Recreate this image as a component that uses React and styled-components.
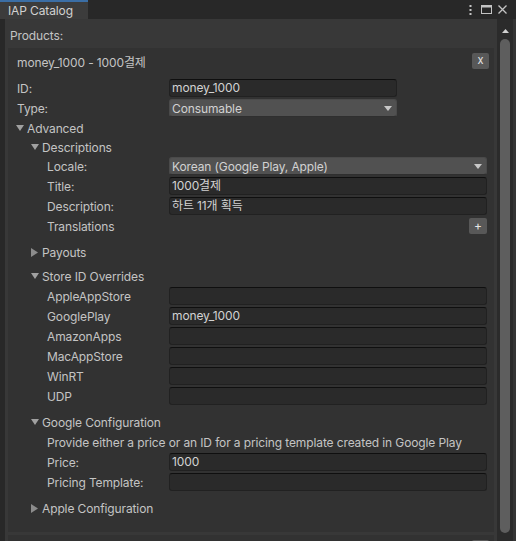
import React from 'react';
import styled, { createGlobalStyle } from 'styled-components';

const Global = createGlobalStyle`
  html, body { margin: 0; padding: 0; background: #282828; }
  body {
    font-family: Inter, "Noto Sans CJK KR", "DejaVu Sans", sans-serif;
    font-size: 12px;
    letter-spacing: -0.12px;
    color: #c4c4c4;
  }
  * { box-sizing: border-box; }
`;

const Window = styled.div`
  width: 516px;
  height: 541px;
  overflow: hidden;
  display: flex;
  flex-direction: column;
  background: #282828;
`;

const TabBar = styled.div`
  height: 19px;
  flex-shrink: 0;
  display: flex;
  align-items: stretch;
  background: #282828;
`;

const Tab = styled.div`
  width: 88px;
  border-top: 2px solid #3b6ea5;
  background: #3c3c3c;
  padding-left: 8px;
  display: flex;
  align-items: center;
  color: #d2d2d2;
`;

const TabIcons = styled.div`
  margin-left: auto;
  display: flex;
  align-items: center;
  padding-right: 6px;
`;

const IconSlot = styled.div`
  width: ${p => p.$w}px;
  height: 19px;
  display: flex;
  align-items: center;
  justify-content: center;
`;

const Body = styled.div`
  flex: 1;
  display: flex;
  min-height: 0;
`;

const LeftStrip = styled.div`
  width: 5px;
  background: #282828;
  flex-shrink: 0;
`;

const Panel = styled.div`
  flex: 1;
  background: #383838;
  padding: 8px 3px 0 3px;
  display: flex;
  flex-direction: column;
  overflow: hidden;
`;

const ProductsLabel = styled.div`
  height: 18px;
  line-height: 18px;
  padding-left: 2px;
  color: #c4c4c4;
`;

const Card = styled.div`
  background: #323232;
  margin-top: ${p => p.$mt}px;
  padding: 4px 7px 8px 9px;
  flex-shrink: 0;
`;

const CardHeader = styled.div`
  height: 18px;
  display: flex;
  align-items: center;
  justify-content: space-between;
  margin-bottom: 8px;
  color: #c4c4c4;
`;

const SmallButton = styled.div`
  width: ${p => p.$w}px;
  height: 16px;
  margin-right: ${p => p.$mr}px;
  background: #585858;
  border-radius: 2px;
  color: #e6e6e6;
  font-size: ${p => p.$fs}px;
  line-height: 15px;
  text-align: center;
`;

const Row = styled.div`
  height: 20px;
  display: flex;
  align-items: center;
`;

const Label = styled.div`
  width: 152px;
  flex-shrink: 0;
  padding-left: ${p => p.$indent}px;
  white-space: nowrap;
  color: #c4c4c4;
`;

const Note = styled.div`
  padding-left: ${p => p.$indent}px;
  white-space: nowrap;
  color: #c4c4c4;
`;

const Field = styled.div`
  height: 18px;
  ${p => (p.$w ? `width: ${p.$w}px;` : 'flex: 1;')}
  background: #2a2a2a;
  border: 1px solid #212121;
  border-top-color: #0f0f0f;
  border-radius: 3px;
  padding-left: 2px;
  line-height: 16px;
  color: #d2d2d2;
  white-space: nowrap;
  overflow: hidden;
`;

const Dropdown = styled.div`
  height: 18px;
  ${p => (p.$w ? `width: ${p.$w}px;` : 'flex: 1;')}
  background: #515151;
  border: 1px solid #4a4a4a;
  border-bottom-color: #2f2f2f;
  border-radius: 3px;
  padding: 0 4px 0 2px;
  display: flex;
  align-items: center;
  justify-content: space-between;
  color: #d2d2d2;
  white-space: nowrap;
`;

const Spacer = styled.div`
  flex: 1;
`;

const FoldHeader = styled.div`
  height: ${p => p.$h}px;
  display: flex;
  align-items: center;
  padding-left: ${p => p.$indent}px;
  margin-bottom: ${p => p.$mb}px;
  color: #c4c4c4;
  white-space: nowrap;
`;

const Arrow = styled.div`
  width: 10px;
  margin-left: -1px;
  margin-right: 1px;
  flex-shrink: 0;
  display: flex;
  align-items: center;
`;

const FoldBody = styled.div`
  padding-bottom: 6px;
`;

const Scrollbar = styled.div`
  width: 16px;
  flex-shrink: 0;
  background: #2b2b2b;
  display: flex;
  flex-direction: column;
  align-items: center;
  padding: 10px 0 8px 0;
`;

const ScrollArrow = styled.div`
  height: 4px;
  margin-bottom: 6px;
  display: flex;
`;

const Thumb = styled.div`
  flex: 1;
  width: 10px;
  background: #5e5e5e;
  border-radius: 5px;
`;

const RightStrip = styled.div`
  width: 3px;
  flex-shrink: 0;
  background: #353535;
`;

const TriDown = ({ color = '#a0a0a0', w = 8, h = 6 }) => (
  <svg width={w} height={h} viewBox={`0 0 ${w} ${h}`}>
    <polygon points={`0,0 ${w},0 ${w / 2},${h}`} fill={color} />
  </svg>
);

const TriRight = () => (
  <svg width="7" height="9" viewBox="0 0 7 9">
    <polygon points="0,0 7,4.5 0,9" fill="#8c8c8c" />
  </svg>
);

const Foldout = ({ title, open, indent, h = 20, mb = 0, children }) => (
  <div>
    <FoldHeader $indent={indent} $h={h} $mb={open ? 0 : mb}>
      <Arrow>{open ? <TriDown color="#a0a0a0" w={8} h={6} /> : <TriRight />}</Arrow>
      {title}
    </FoldHeader>
    {open && <FoldBody>{children}</FoldBody>}
  </div>
);

const FieldRow = ({ label, value = '', indent = 30, w }) => (
  <Row>
    <Label $indent={indent}>{label}</Label>
    <Field $w={w}>{value}</Field>
  </Row>
);

const DropRow = ({ label, value, indent = 30, w }) => (
  <Row>
    <Label $indent={indent}>{label}</Label>
    <Dropdown $w={w}>
      <span>{value}</span>
      <TriDown color="#c8c8c8" w={8} h={5} />
    </Dropdown>
  </Row>
);

export default function App() {
  return (
    <>
      <Global />
      <Window>
        <TabBar>
          <Tab>IAP Catalog</Tab>
          <TabIcons>
            <IconSlot $w={16}>
              <svg width="3" height="10" viewBox="0 0 3 10">
                <rect x="0.5" y="0" width="2" height="2" fill="#c4c4c4" />
                <rect x="0.5" y="4" width="2" height="2" fill="#c4c4c4" />
                <rect x="0.5" y="8" width="2" height="2" fill="#c4c4c4" />
              </svg>
            </IconSlot>
            <IconSlot $w={16}>
              <svg width="11" height="9" viewBox="0 0 11 9">
                <rect x="0.5" y="0.5" width="10" height="8" fill="none" stroke="#c4c4c4" strokeWidth="1" />
                <rect x="0.5" y="0.5" width="10" height="2" fill="#c4c4c4" />
              </svg>
            </IconSlot>
            <IconSlot $w={16}>
              <svg width="9" height="9" viewBox="0 0 9 9">
                <path d="M0.5 0.5 L8.5 8.5 M8.5 0.5 L0.5 8.5" stroke="#c4c4c4" strokeWidth="1.3" />
              </svg>
            </IconSlot>
          </TabIcons>
        </TabBar>
        <Body>
          <LeftStrip />
          <Panel>
            <ProductsLabel>Products:</ProductsLabel>
            <Card $mt={3}>
              <CardHeader>
                <span>money_1000 - 1000결제</span>
                <SmallButton $w={17} $mr={-2} $fs={11}>x</SmallButton>
              </CardHeader>
              <FieldRow label="ID:" value="money_1000" indent={0} w={228} />
              <DropRow label="Type:" value="Consumable" indent={0} w={228} />
              <Foldout title="Advanced" open indent={0} h={20}>
                <Foldout title="Descriptions" open indent={15} h={18}>
                  <DropRow label="Locale:" value="Korean (Google Play, Apple)" />
                  <FieldRow label="Title:" value="1000결제" />
                  <FieldRow label="Description:" value="하트 11개 획득" />
                  <Row>
                    <Label $indent={30}>Translations</Label>
                    <Spacer />
                    <SmallButton $w={18} $mr={0} $fs={12}>+</SmallButton>
                  </Row>
                </Foldout>
                <Foldout title="Payouts" indent={15} mb={4} />
                <Foldout title="Store ID Overrides" open indent={15}>
                  <FieldRow label="AppleAppStore" />
                  <FieldRow label="GooglePlay" value="money_1000" />
                  <FieldRow label="AmazonApps" />
                  <FieldRow label="MacAppStore" />
                  <FieldRow label="WinRT" />
                  <FieldRow label="UDP" />
                </Foldout>
                <Foldout title="Google Configuration" open indent={15}>
                  <Row>
                    <Note $indent={30}>Provide either a price or an ID for a pricing template created in Google Play</Note>
                  </Row>
                  <FieldRow label="Price:" value="1000" />
                  <FieldRow label="Pricing Template:" />
                </Foldout>
                <Foldout title="Apple Configuration" indent={15} />
              </Foldout>
            </Card>
            <Card $mt={3}>
              <CardHeader>
                <span>money_2000 - 2000결제</span>
                <SmallButton $w={17} $mr={-2} $fs={11}>x</SmallButton>
              </CardHeader>
            </Card>
          </Panel>
          <Scrollbar>
            <ScrollArrow>
              <svg width="7" height="4" viewBox="0 0 7 4">
                <polygon points="0,4 7,4 3.5,0" fill="#d0d0d0" />
              </svg>
            </ScrollArrow>
            <Thumb />
          </Scrollbar>
          <RightStrip />
        </Body>
      </Window>
    </>
  );
}
